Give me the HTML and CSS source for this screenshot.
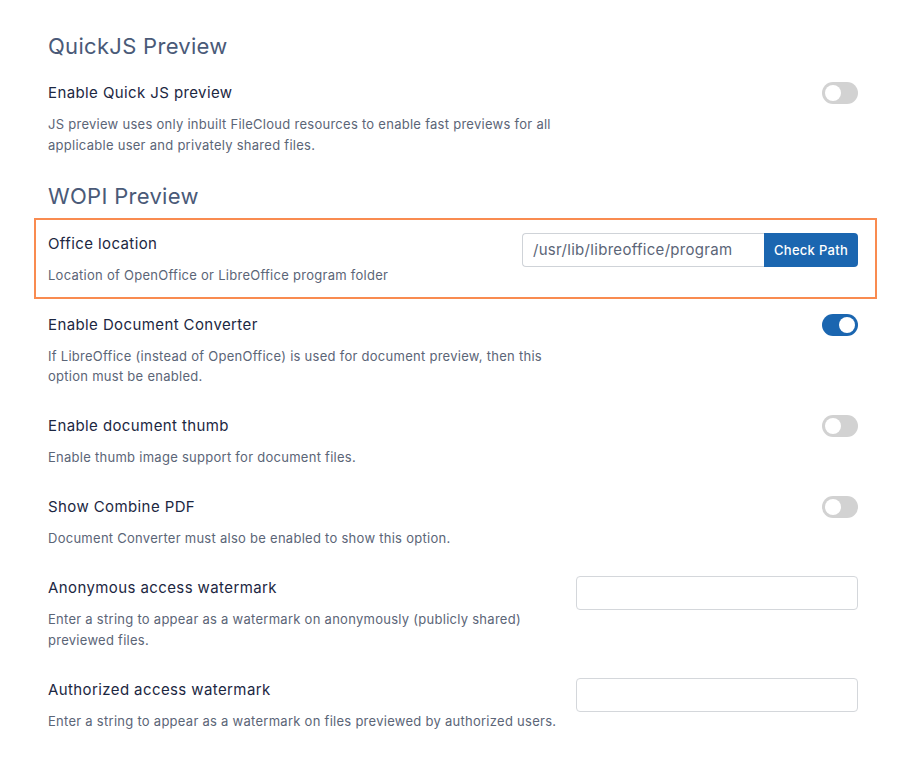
FILE: index.html
```html
<!DOCTYPE html>
<html lang="en">
<head>
<meta charset="utf-8">
<title>Preview settings</title>
<link rel="stylesheet" href="styles.css">
</head>
<body>
<main class="page">
  <h2 class="section-title first">QuickJS Preview</h2>

  <div class="row">
    <div class="info">
      <div class="label">Enable Quick JS preview</div>
      <p class="desc">JS preview uses only inbuilt FileCloud resources to enable fast previews for all<br>applicable user and privately shared files.</p>
    </div>
    <span class="toggle"></span>
  </div>

  <h2 class="section-title">WOPI Preview</h2>

  <div class="row highlight">
    <div class="info">
      <div class="label">Office location</div>
      <p class="desc">Location of OpenOffice or LibreOffice program folder</p>
    </div>
    <div class="path-group">
      <input class="path-input" type="text" value="/usr/lib/libreoffice/program">
      <button class="btn">Check Path</button>
    </div>
  </div>

  <div class="row">
    <div class="info">
      <div class="label">Enable Document Converter</div>
      <p class="desc">If LibreOffice (instead of OpenOffice) is used for document preview, then this<br>option must be enabled.</p>
    </div>
    <span class="toggle on"></span>
  </div>

  <div class="row">
    <div class="info">
      <div class="label">Enable document thumb</div>
      <p class="desc">Enable thumb image support for document files.</p>
    </div>
    <span class="toggle"></span>
  </div>

  <div class="row">
    <div class="info">
      <div class="label">Show Combine PDF</div>
      <p class="desc">Document Converter must also be enabled to show this option.</p>
    </div>
    <span class="toggle"></span>
  </div>

  <div class="row">
    <div class="info">
      <div class="label">Anonymous access watermark</div>
      <p class="desc">Enter a string to appear as a watermark on anonymously (publicly shared)<br>previewed files.</p>
    </div>
    <input class="text-input" type="text">
  </div>

  <div class="row">
    <div class="info">
      <div class="label">Authorized access watermark</div>
      <p class="desc">Enter a string to appear as a watermark on files previewed by authorized users.</p>
    </div>
    <input class="text-input" type="text">
  </div>
</main>
</body>
</html>
```

FILE: styles.css
```css
* { box-sizing: border-box; }

html, body {
  margin: 0;
  padding: 0;
  background: #ffffff;
}

body {
  font-family: Inter, "Noto Sans", "Liberation Sans", sans-serif;
  color: #1c2742;
}

.page {
  width: 810px;
  margin-left: 48px;
  padding-top: 32px;
}

.section-title {
  margin: 12px 0 8px;
  font-size: 22px;
  line-height: 28px;
  font-weight: 400;
  letter-spacing: 0.3px;
  color: #4a5a78;
}

.section-title.first {
  margin-top: 0;
}

.row {
  display: flex;
  justify-content: space-between;
  align-items: flex-start;
  margin: 0 -19px 0 -14px;
  padding: 13px 17px 12.5px 12px;
  border: 2px solid transparent;
}

.row.highlight {
  border-color: #f98b50;
  padding-top: 14px;
  padding-bottom: 11.5px;
  margin-bottom: 1px;
}

.label {
  font-size: 15px;
  line-height: 20px;
  letter-spacing: 0.4px;
  color: #1c2742;
}

.desc {
  margin: 11px 0 0;
  font-size: 13px;
  line-height: 20.5px;
  letter-spacing: 0.27px;
  color: #5b6577;
}

.toggle {
  position: relative;
  flex: none;
  width: 36px;
  height: 22px;
  margin-top: -1px;
  border-radius: 11px;
  background: #d2d2d2;
}

.toggle::after {
  content: "";
  position: absolute;
  top: 3px;
  left: 3px;
  width: 16px;
  height: 16px;
  border-radius: 50%;
  background: #ffffff;
}

.toggle.on {
  background: #1b66b0;
}

.toggle.on::after {
  left: 17px;
}

.path-group {
  display: flex;
  flex: none;
  margin-top: -1px;
}

.path-input {
  width: 242px;
  height: 34px;
  padding: 0 10px;
  border: 1px solid #cfd3d8;
  border-right: none;
  border-radius: 4px 0 0 4px;
  font-family: inherit;
  font-size: 15px;
  letter-spacing: 0.3px;
  color: #5b6577;
  background: #fff;
  outline: none;
}

.btn {
  width: 94px;
  height: 34px;
  padding: 0;
  border: none;
  border-radius: 0 4px 4px 0;
  background: #1b66b0;
  color: #ffffff;
  font-family: inherit;
  font-size: 13px;
  font-weight: 500;
  letter-spacing: 0.3px;
}

.text-input {
  flex: none;
  width: 282px;
  height: 34px;
  margin-top: -2px;
  border: 1px solid #d4d7db;
  border-radius: 4px;
  background: #fff;
  outline: none;
}
```
